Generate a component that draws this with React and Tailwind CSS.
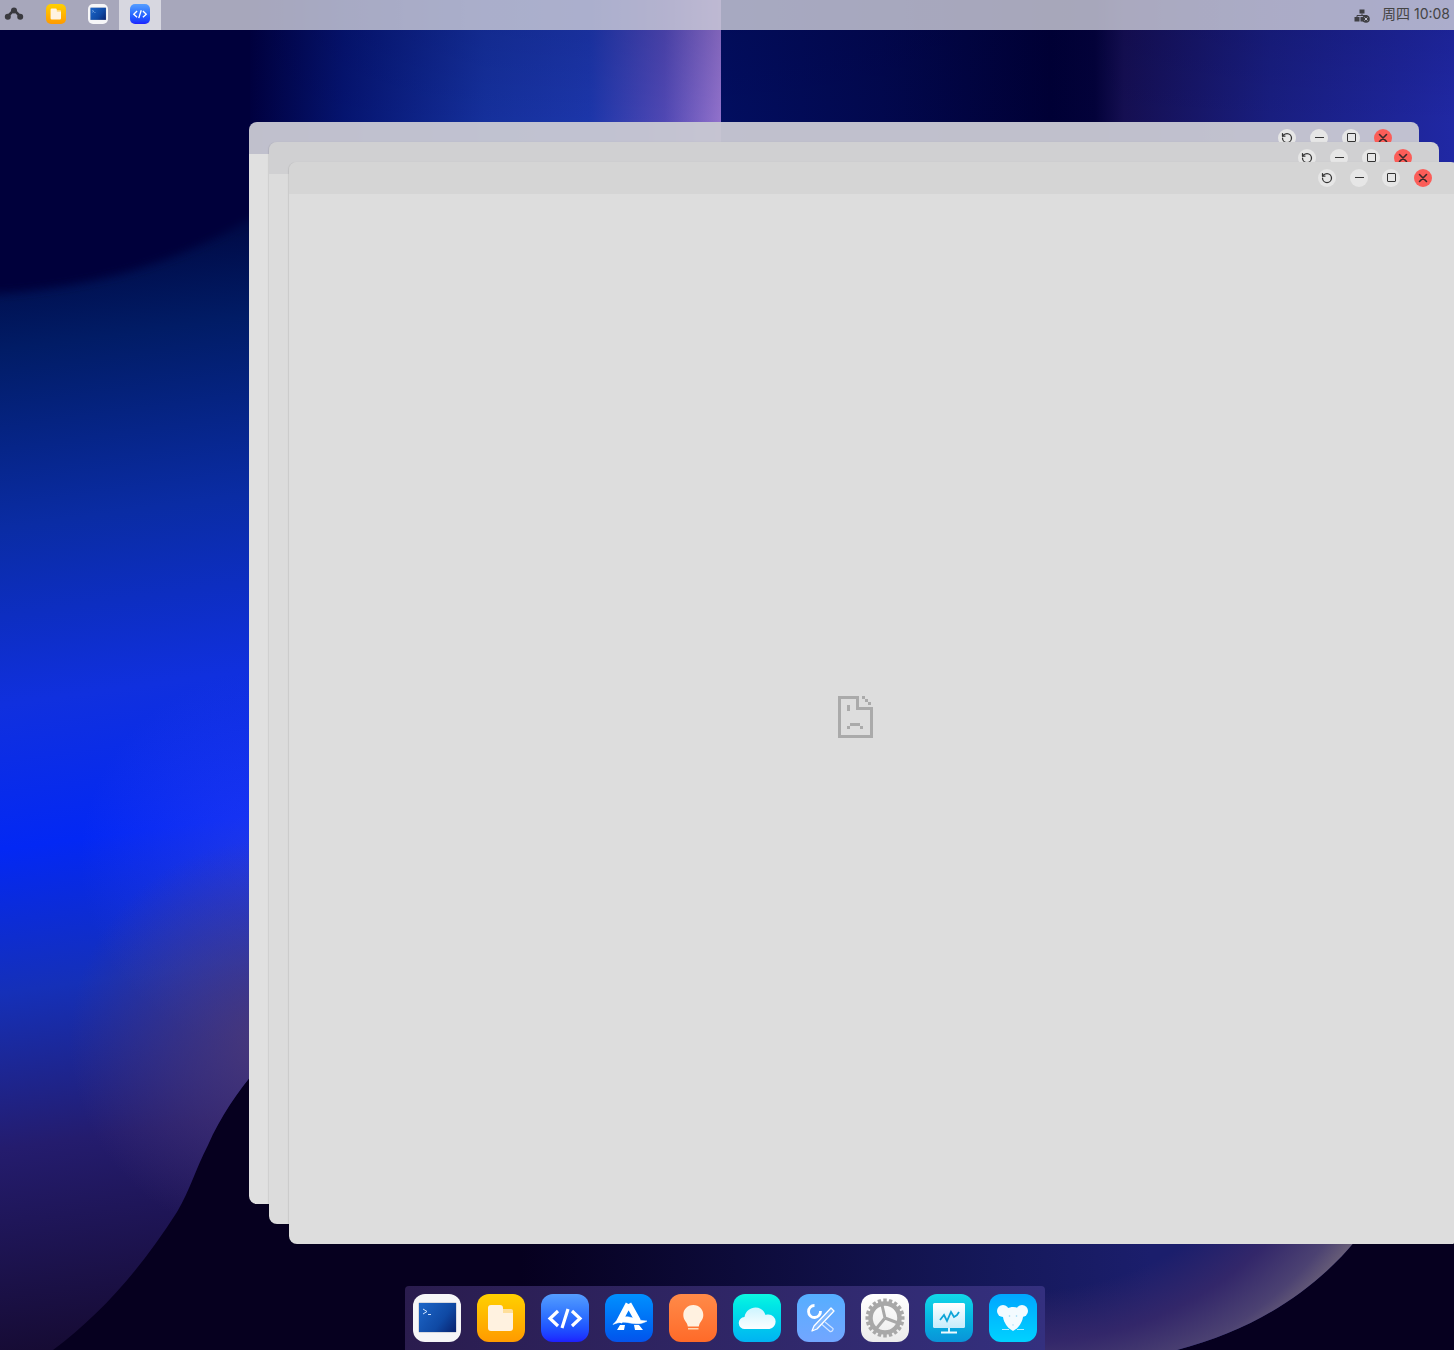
import React from "react";
import { RotateCcw } from "lucide-react";

const blob =
  "M0 1350V260L300 150V1030C280 1040 232 1090 208 1145C195 1170 190 1190 177 1212C140 1270 100 1315 53 1350Z";

function Wallpaper() {
  return (
    <svg className="absolute inset-0" width="1454" height="1350" viewBox="0 0 1454 1350">
      <defs>
        <linearGradient id="vblue" x1="0" y1="262" x2="150" y2="1350" gradientUnits="userSpaceOnUse">
          <stop offset="0" stopColor="#000b48" />
          <stop offset="0.08" stopColor="#011c66" />
          <stop offset="0.24" stopColor="#0a2ca4" />
          <stop offset="0.4" stopColor="#1030de" />
          <stop offset="0.53" stopColor="#0328f4" />
          <stop offset="0.66" stopColor="#1530b8" />
          <stop offset="0.8" stopColor="#241c6e" />
          <stop offset="1" stopColor="#150a30" />
        </linearGradient>
        <radialGradient id="vlit" cx="270" cy="860" r="190" gradientUnits="userSpaceOnUse">
          <stop offset="0" stopColor="#4a50f0" stopOpacity="0.36" />
          <stop offset="1" stopColor="#4a50f0" stopOpacity="0" />
        </radialGradient>
        <radialGradient id="vpur" cx="270" cy="1040" r="200" gradientUnits="userSpaceOnUse">
          <stop offset="0" stopColor="#4e3a76" stopOpacity="0.9" />
          <stop offset="1" stopColor="#4e3a76" stopOpacity="0" />
        </radialGradient>
        <linearGradient id="top1" x1="250" y1="0" x2="721" y2="0" gradientUnits="userSpaceOnUse">
          <stop offset="0" stopColor="#00003f" />
          <stop offset="0.2" stopColor="#051470" />
          <stop offset="0.5" stopColor="#15309c" />
          <stop offset="0.72" stopColor="#1c36aa" />
          <stop offset="0.88" stopColor="#5048b4" />
          <stop offset="1" stopColor="#9272cc" />
        </linearGradient>
        <linearGradient id="top2" x1="721" y1="0" x2="1454" y2="0" gradientUnits="userSpaceOnUse">
          <stop offset="0" stopColor="#020e60" />
          <stop offset="0.22" stopColor="#02084e" />
          <stop offset="0.45" stopColor="#000035" />
          <stop offset="0.51" stopColor="#03023a" />
          <stop offset="0.55" stopColor="#150f52" />
          <stop offset="0.75" stopColor="#191e80" />
          <stop offset="1" stopColor="#2028a4" />
        </linearGradient>
        <linearGradient id="topShade" x1="0" y1="30" x2="0" y2="125" gradientUnits="userSpaceOnUse">
          <stop offset="0" stopColor="#000030" stopOpacity="0.12" />
          <stop offset="1" stopColor="#000030" stopOpacity="0" />
        </linearGradient>
        <linearGradient id="blob2" x1="1150" y1="1300" x2="520" y2="1300" gradientUnits="userSpaceOnUse">
          <stop offset="0" stopColor="#1b1e6c" />
          <stop offset="0.25" stopColor="#15185a" />
          <stop offset="1" stopColor="#06001f" />
        </linearGradient>
        <radialGradient id="blob2edge" cx="1030" cy="1010" r="400" gradientUnits="userSpaceOnUse">
          <stop offset="0.7" stopColor="#33276a" stopOpacity="0" />
          <stop offset="0.83" stopColor="#33276a" stopOpacity="1" />
          <stop offset="0.94" stopColor="#4c4272" />
          <stop offset="1" stopColor="#6a6078" />
        </radialGradient>
        <filter id="soft" x="-10%" y="-10%" width="120%" height="120%">
          <feGaussianBlur stdDeviation="5" />
        </filter>
      </defs>
      <rect width="1454" height="1350" fill="#06001f" />
      <path d={blob} fill="url(#vblue)" />
      <path d={blob} fill="url(#vlit)" />
      <path d={blob} fill="url(#vpur)" />
      <path d="M-30 -30H300V200L250 219C170 265 90 290 -30 295Z" fill="#00003a" filter="url(#soft)" />
      <rect x="250" y="0" width="471" height="200" fill="url(#top1)" />
      <rect x="721" y="0" width="733" height="200" fill="url(#top2)" />
      <rect x="250" y="0" width="1204" height="130" fill="url(#topShade)" />
      <path d="M500 1240H1356C1315 1290 1255 1330 1177 1350H500Z" fill="url(#blob2)" />
      <path d="M1000 1240H1356C1315 1290 1255 1330 1177 1350H1045V1286H1000Z" fill="url(#blob2edge)" />
    </svg>
  );
}

function Terminal() {
  return (
    <svg viewBox="0 0 48 48" className="size-full">
      <defs>
        <linearGradient id="term" x1="6" y1="9" x2="44" y2="38" gradientUnits="userSpaceOnUse">
          <stop offset="0" stopColor="#1d66c8" />
          <stop offset="0.6" stopColor="#0f49a4" />
          <stop offset="1" stopColor="#08206c" />
        </linearGradient>
      </defs>
      <rect x="5.500" y="8.500" width="38" height="30" rx="1" fill="#b8bcc8" />
      <rect x="6" y="9" width="37" height="29" fill="url(#term)" />
      <path d="M10 15l4 2.500-4 2.500M15 20.500h3" fill="none" stroke="#cfe4ff" strokeWidth="1" />
    </svg>
  );
}

function Files() {
  return (
    <svg viewBox="0 0 48 48" className="size-full">
      <rect x="24" y="15" width="12" height="8" rx="2" fill="#ffdf9a" />
      <path d="M11 14a3 3 0 0 1 3-3h9a3 3 0 0 1 3 3v5h10v15a3 3 0 0 1-3 3H14a3 3 0 0 1-3-3Z" fill="#fff2e0" />
    </svg>
  );
}

function Code() {
  return (
    <svg viewBox="0 0 48 48" className="size-full" fill="none" stroke="#fff" strokeWidth="3.200">
      <path d="M17 17l-8 7.500 8 7.500M31 17l8 7.500-8 7.500M27 15l-6 19" />
    </svg>
  );
}

function Store() {
  return (
    <svg viewBox="0 0 48 48" className="size-full" fill="none" stroke="#fff">
      <path d="M23.500 10L14 28M23.500 10L33 27" strokeWidth="6" />
      <path d="M8 30.500c5-6 10-8.500 16-7.500 6 1 11 4 18 4-5 3-11 3.500-17 2-6-1.500-11-1-17 1.500Z" fill="#fff" strokeWidth="0.500" />
      <path d="M12 36l3-5h5l-1 5ZM29 31h5l4 5h-8Z" fill="#fff" stroke="none" />
    </svg>
  );
}

function Bulb() {
  return (
    <svg viewBox="0 0 48 48" className="size-full">
      <path d="M24.300 11c6 0 10 4.500 10 10 0 4.500-2.800 6.500-3.800 9-.4 1-.5 1.800-.7 2.500h-11c-.2-.7-.3-1.500-.7-2.500-1-2.500-3.800-4.500-3.800-9 0-5.500 4-10 10-10Z" fill="#fff1e0" />
      <rect x="19" y="34" width="10.500" height="1.500" fill="#ffd9b5" />
    </svg>
  );
}

function Cloud() {
  return (
    <svg viewBox="0 0 48 48" className="size-full">
      <defs>
        <linearGradient id="cl" x1="0" y1="12" x2="0" y2="35" gradientUnits="userSpaceOnUse">
          <stop offset="0" stopColor="#c9f4ff" />
          <stop offset="1" stopColor="#fdfeff" />
        </linearGradient>
      </defs>
      <path d="M12 35a6 6 0 0 1-.5-12c1-6 6-9.500 11-9.500 5 0 8.500 3 10 7.500 1-.5 2-.5 3-.5a7.300 7.300 0 0 1 1 14.500Z" fill="url(#cl)" />
    </svg>
  );
}

function Tools() {
  return (
    <svg viewBox="0 0 48 48" className="size-full" fill="none">
      <path d="M17.500 11.500A6 6 0 1 0 23.500 17" stroke="#fff" strokeWidth="2.800" />
      <path d="M34 14l3 3-17 18-5 2 2-5Z" stroke="#fff" strokeWidth="1.300" strokeLinejoin="round" fill="#ffffff30" />
      <path d="M28 28l8 6.500a2.500 2.500 0 0 1-3 3l-8-7" stroke="#ffffffb0" strokeWidth="1.300" />
    </svg>
  );
}

const teeth = [0, 18, 36, 54, 72, 90, 108, 126, 144, 162, 180, 198, 216, 234, 252, 270, 288, 306, 324, 342];

function Gear() {
  return (
    <svg viewBox="0 0 48 48" className="size-full" fill="none" stroke="#a8a8a8">
      <circle cx="24" cy="24" r="14.500" strokeWidth="4.500" />
      {teeth.map((a) => (
        <rect key={a} x="22.250" y="4.500" width="3.500" height="5" fill="#a8a8a8" stroke="none" transform={`rotate(${a} 24 24)`} />
      ))}
      <path d="M24 24L21 11M24 24L37 29M24 24L15 35" strokeWidth="3" />
    </svg>
  );
}

function Monitor() {
  return (
    <svg viewBox="0 0 48 48" className="size-full" fill="none">
      <defs>
        <linearGradient id="mon" x1="0" y1="9" x2="0" y2="34" gradientUnits="userSpaceOnUse">
          <stop offset="0" stopColor="#ffffff" />
          <stop offset="1" stopColor="#c5ecfb" />
        </linearGradient>
      </defs>
      <rect x="8" y="9" width="32" height="25" rx="1.500" fill="url(#mon)" />
      <path d="M15 26l4-5 3 6 4-9 3 5 3-2 2-3" stroke="#0ea5d8" strokeWidth="1.800" />
      <path d="M24 34v4M16 38.500h16" stroke="#eefaff" strokeWidth="1.800" />
    </svg>
  );
}

function Mouse() {
  return (
    <svg viewBox="0 0 48 48" className="size-full">
      <circle cx="14" cy="17" r="6" fill="#f3fbff" />
      <circle cx="33" cy="17" r="6" fill="#f3fbff" />
      <path d="M14 19c2-4 6-6 10-6s8 2 10 6c1 6-3 13-7 16l-3 2-3-2c-4-3-8-10-7-16Z" fill="#f3fbff" />
      <circle cx="20.500" cy="22" r="0.800" fill="#8fd6f5" />
      <circle cx="27.500" cy="22" r="0.800" fill="#8fd6f5" />
      <path d="M23 30.500h2l-1 1.500Z" fill="#9fdcf7" />
      <path d="M13 35.500h7M28 35.500h7" stroke="#d8f6ff" strokeWidth="0.800" />
    </svg>
  );
}

function Dock() {
  const tile = "size-12 rounded-xl overflow-hidden";
  return (
    <div className="absolute left-[405px] top-[1286px] flex h-16 w-[640px] gap-4 rounded-t-[4px] bg-linear-to-r from-[#2a1c4e] to-[#34307f] p-2">
      <div className={`${tile} bg-[#f6f6f8]`}><Terminal /></div>
      <div className={`${tile} bg-linear-to-b from-[#ffd000] to-[#ff9a00]`}><Files /></div>
      <div className={`${tile} bg-linear-to-b from-[#559dff] to-[#1f1eff]`}><Code /></div>
      <div className={`${tile} bg-linear-to-b from-[#0090ff] to-[#0553ec]`}><Store /></div>
      <div className={`${tile} bg-linear-to-b from-[#ff8a48] to-[#ff6a28]`}><Bulb /></div>
      <div className={`${tile} bg-linear-to-b from-[#0df7e0] to-[#02b3f2]`}><Cloud /></div>
      <div className={`${tile} bg-linear-to-b from-[#55aeff] to-[#72a6ff]`}><Tools /></div>
      <div className={`${tile} bg-linear-to-b from-[#ffffff] to-[#ebebeb]`}><Gear /></div>
      <div className={`${tile} bg-linear-to-b from-[#12d8e8] to-[#0a93d8]`}><Monitor /></div>
      <div className={`${tile} bg-linear-to-b from-[#00a6ff] to-[#00d2ff]`}><Mouse /></div>
    </div>
  );
}

function TopBar() {
  const tile = "size-5 rounded-[5px] overflow-hidden";
  return (
    <div className="absolute inset-x-0 top-0 flex h-[30px] items-center bg-[#ccccd8]/82 pr-1 text-[#444]">
      <div className="flex h-full w-7 items-center justify-center pb-[2px]">
        <svg width="20" height="14" viewBox="0 0 20 14" fill="#3a3a3f">
          <path d="M10 3L4 9M10 3l6 6" stroke="#3a3a3f" strokeWidth="2.500" />
          <circle cx="10" cy="3.500" r="3" />
          <circle cx="3.800" cy="9.800" r="3" />
          <circle cx="16.200" cy="9.800" r="3" />
        </svg>
      </div>
      <div className="ml-[7px] flex h-full w-[42px] items-center justify-center pb-[2px]">
        <div className={`${tile} bg-linear-to-b from-[#ffd000] to-[#ff9a00]`}><Files /></div>
      </div>
      <div className="flex h-full w-[42px] items-center justify-center pb-[2px]">
        <div className={`${tile} bg-[#f6f6f8]`}><Terminal /></div>
      </div>
      <div className="flex h-full w-[42px] items-center justify-center bg-white/55 pb-[2px]">
        <div className={`${tile} bg-linear-to-b from-[#559dff] to-[#1f1eff]`}><Code /></div>
      </div>
      <div className="ml-auto flex items-center gap-[12px]">
        <svg width="16" height="14" viewBox="0 0 16 14" fill="#3f3f44" className="mt-[2px]">
          <rect x="5.500" y="0.500" width="5" height="4" />
          <rect x="0.500" y="8" width="5" height="4.500" />
          <rect x="6.500" y="8" width="4" height="4.500" />
          <path d="M8 4.500v2M3 8V6.500h10V8" fill="none" stroke="#3f3f44" />
          <circle cx="12" cy="10" r="3.800" />
          <path d="M10.500 8.500l3 3M13.500 8.500l-3 3" stroke="#c0c0d0" strokeWidth="1" />
        </svg>
        <span className="mb-[2px] text-sm leading-none whitespace-nowrap [font-family:Inter,'Noto_Sans_CJK_SC',sans-serif]">周四 10:08</span>
      </div>
    </div>
  );
}

function WinButtons() {
  const btn = "flex size-[18px] items-center justify-center rounded-full bg-[#e6e6e6] text-[#333]";
  return (
    <div className="ml-auto flex items-center gap-[14px] pr-[27px]">
      <div className={btn}><RotateCcw size={12} strokeWidth={2.5} /></div>
      <div className={`${btn} pb-px`}><div className="h-px w-[9px] bg-[#333]" /></div>
      <div className={`${btn} pb-px`}><div className="size-[9px] rounded-[1px] border border-[#333]" /></div>
      <div className="flex size-[18px] items-center justify-center rounded-full bg-[#fb5d58]">
        <svg width="10" height="10" viewBox="0 0 10 10" stroke="#3a2a2a" strokeWidth="1.600" strokeLinecap="round">
          <path d="M1.500 1.500l7 7M8.500 1.500l-7 7" />
        </svg>
      </div>
    </div>
  );
}

function BrokenIcon() {
  return (
    <svg width="35" height="42" viewBox="0 0 105 126" fill="#aaaaaa" shapeRendering="crispEdges">
      <rect x="0" y="0" width="9" height="126" />
      <rect x="0" y="0" width="63" height="9" />
      <rect x="54" y="0" width="9" height="42" />
      <rect x="54" y="33" width="50" height="9" />
      <rect x="95" y="33" width="9" height="93" />
      <rect x="0" y="117" width="104" height="9" />
      <rect x="72" y="0" width="9" height="9" />
      <rect x="81" y="9" width="9" height="9" />
      <rect x="90" y="18" width="9" height="9" />
      <rect x="27" y="27" width="9" height="18" />
      <rect x="36" y="81" width="30" height="9" />
      <rect x="27" y="90" width="9" height="9" />
      <rect x="66" y="90" width="9" height="9" />
    </svg>
  );
}

export default function App() {
  return (
    <div className="relative h-[1350px] w-full overflow-hidden bg-[#06001f]">
      <Wallpaper />
      <TopBar />

      <div className="absolute left-[249px] top-[122px] flex h-[1082px] w-[1170px] flex-col overflow-hidden rounded-lg">
        <div className="flex h-8 shrink-0 items-center bg-[#c8c8d2]/96"><WinButtons /></div>
        <div className="flex-1 bg-[#e0e0e0]" />
      </div>

      <div className="absolute left-[269px] top-[142px] flex h-[1082px] w-[1170px] flex-col overflow-hidden rounded-lg shadow-[-1px_0_1px_rgba(0,0,0,0.08)]">
        <div className="flex h-8 shrink-0 items-center bg-[#d0d0d2]"><WinButtons /></div>
        <div className="flex-1 bg-[#dcdcdc]" />
      </div>

      <div className="absolute left-[289px] top-[162px] flex h-[1082px] w-[1170px] flex-col overflow-hidden rounded-lg shadow-[-1px_0_1px_rgba(0,0,0,0.08)]">
        <div className="flex h-8 shrink-0 items-center bg-[#d5d5d5]"><WinButtons /></div>
        <div className="flex flex-1 items-center bg-[#dddddd] pb-[4px] pl-[549px]">
          <BrokenIcon />
        </div>
      </div>

      <Dock />
    </div>
  );
}
